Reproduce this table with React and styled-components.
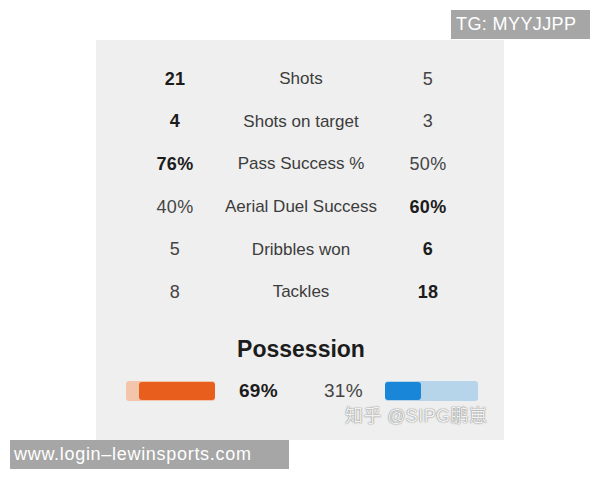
import React from 'react';
import styled, { createGlobalStyle } from 'styled-components';

const GlobalStyle = createGlobalStyle`
    body {
        margin: 0;
        background: #ffffff;
        font-family: 'Liberation Sans', Arial, sans-serif;
    }
`;

const Page = styled.div`
    position: relative;
    width: 600px;
    height: 480px;
    box-sizing: border-box;
    padding: 40px 0 0 96px;
    overflow: hidden;
`;

const Card = styled.div`
    position: relative;
    width: 408px;
    height: 400px;
    background: #efefef;
    box-sizing: border-box;
    padding-top: 18px;
`;

const StatsGrid = styled.div`
    display: grid;
    grid-template-columns: 100px 152px 102px;
    grid-auto-rows: 42.6px;
    margin-left: 29px;
    align-items: center;
    justify-items: center;
`;

const Value = styled.span`
    font-size: 18px;
    font-weight: ${(props) => (props.bold ? 700 : 400)};
    color: ${(props) => (props.bold ? '#1c1c1c' : '#444444')};
    letter-spacing: 0.3px;
`;

const Label = styled.span`
    font-size: 17px;
    color: #3c3c3c;
    white-space: nowrap;
`;

const Heading = styled.h3`
    margin: 22px 0 0;
    text-align: center;
    font-size: 23px;
    font-weight: 700;
    color: #1c1c1c;
    line-height: 26px;
    padding-left: 2px;
`;

const PossessionRow = styled.div`
    display: flex;
    align-items: center;
    margin: 19px 0 0 30px;
    height: 20px;
`;

const Bar = styled.div`
    position: relative;
    width: ${(props) => props.width}px;
    height: 20px;
    border-radius: 3px;
    background: ${(props) => props.track};
    overflow: hidden;
`;

const Fill = styled.div`
    position: absolute;
    top: 1px;
    bottom: 1px;
    ${(props) => (props.side === 'right' ? 'right: 0;' : 'left: 0;')}
    border-radius: 3px;
    background: ${(props) => props.color};
`;

const Pct = styled.span`
    font-size: 19px;
    font-weight: ${(props) => (props.bold ? 700 : 400)};
    color: ${(props) => (props.bold ? '#1c1c1c' : '#444444')};
    margin: ${(props) => props.margin};
    letter-spacing: 0.3px;
`;

const Watermark = styled.span`
    position: absolute;
    left: 249px;
    top: 361px;
    font-family: 'Liberation Sans', 'Noto Sans CJK SC', sans-serif;
    font-size: 18px;
    color: rgba(255, 255, 255, 0.92);
    text-shadow: 0 0 1px rgba(0, 0, 0, 0.5), 0 0 2px rgba(0, 0, 0, 0.25);
    letter-spacing: 0.4px;
    white-space: nowrap;
`;

const Tag = styled.div`
    position: absolute;
    ${(props) => props.place}
    height: 29px;
    display: flex;
    align-items: center;
    box-sizing: border-box;
    padding-left: ${(props) => props.pad}px;
    background: #a6a6a6;
    color: #ffffff;
    font-size: 18px;
    letter-spacing: ${(props) => props.spacing}px;
    white-space: nowrap;
`;

const stats = [
    { home: '21', label: 'Shots', away: '5', win: 'home' },
    { home: '4', label: 'Shots on target', away: '3', win: 'home' },
    { home: '76%', label: 'Pass Success %', away: '50%', win: 'home' },
    { home: '40%', label: 'Aerial Duel Success', away: '60%', win: 'away' },
    { home: '5', label: 'Dribbles won', away: '6', win: 'away' },
    { home: '8', label: 'Tackles', away: '18', win: 'away' },
];

export default function App() {
    return (
        <>
            <GlobalStyle />
            <Page>
                <Card>
                    <StatsGrid>
                        {stats.map((s) => (
                            <React.Fragment key={s.label}>
                                <Value bold={s.win === 'home'}>{s.home}</Value>
                                <Label>{s.label}</Label>
                                <Value bold={s.win === 'away'}>{s.away}</Value>
                            </React.Fragment>
                        ))}
                    </StatsGrid>
                    <Heading>Possession</Heading>
                    <PossessionRow>
                        <Bar width={89} track="#f3c6ab">
                            <Fill side="right" color="#e85e1c" style={{ width: 76 }} />
                        </Bar>
                        <Pct bold margin="0 0 0 24px">69%</Pct>
                        <Pct margin="0 0 0 46px">31%</Pct>
                        <Bar width={93} track="#b6d5ea" style={{ marginLeft: 22 }}>
                            <Fill side="left" color="#1a86d8" style={{ width: 36 }} />
                        </Bar>
                    </PossessionRow>
                    <Watermark>知乎 @SIPG鹏崽</Watermark>
                </Card>
                <Tag place="left: 451px; top: 10px; width: 139px;" pad={5} spacing={0.4}>
                    TG: MYYJJPP
                </Tag>
                <Tag place="left: 10px; top: 440px; width: 279px;" pad={4} spacing={0.7}>
                    www.login–lewinsports.com
                </Tag>
            </Page>
        </>
    );
}
